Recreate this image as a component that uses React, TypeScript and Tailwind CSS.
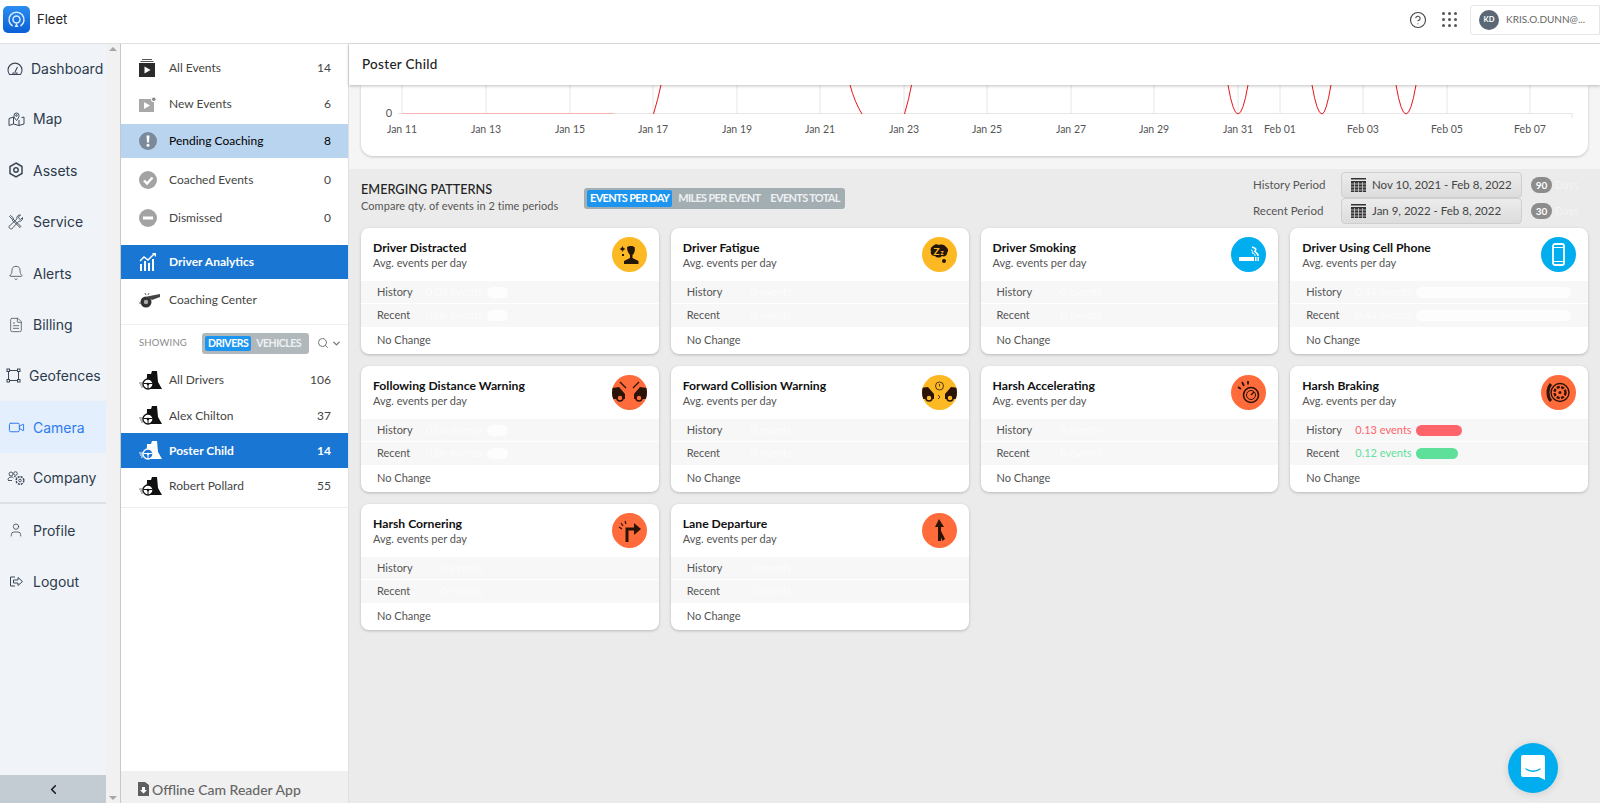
import { ReactNode } from "react";
import { Bell, ChevronDown, ChevronLeft, CircleHelp, FileText, Search, User, Video } from "lucide-react";

const UI_FONT = "font-['Lato',sans-serif]";

function Dial() {
  return (
    <svg width="16" height="15" viewBox="0 0 16 15" fill="none" stroke="currentColor" strokeWidth="1.100">
      <path d="M2.500 13.500a7 7 0 1 1 11 0z" />
      <path d="M8 11l2.500-5M6 13.500v-1.500h4v1.500" />
    </svg>
  );
}

function FoldMap() {
  return (
    <svg width="17" height="16" viewBox="0 0 17 16" fill="none" stroke="currentColor" strokeWidth="1">
      <path d="M5.500 6L1 7.500v7L5.500 13l5.500 1.500 5-1.500V6l-2.500.7M5.500 6v7M11 9v5.500" />
      <path d="M8.500 9.500C6.800 7.500 6 6 6 4.500a2.500 2.500 0 0 1 5 0c0 1.500-.8 3-2.500 5z" />
      <circle cx="8.500" cy="4.500" r=".8" />
    </svg>
  );
}

function Hex() {
  return (
    <svg width="16" height="16" viewBox="0 0 16 16" fill="none" stroke="currentColor" strokeWidth="1.500">
      <path d="M8 1l6 3.500v7L8 15l-6-3.500v-7z" />
      <circle cx="8" cy="8" r="2.200" />
    </svg>
  );
}

function Tools() {
  return (
    <svg width="16" height="16" viewBox="0 0 16 16" fill="none" stroke="currentColor" strokeWidth=".9">
      <path d="M1.500 2.500l1-1L5.500 4 4.500 5.500zM5 5l8 7.500-1 1L4 6" />
      <path d="M14.500 3.500L12.500 5.500 11 4.500 10.500 3 12.500 1a3 3 0 0 0-3.500 3.800L2.500 11a2 2 0 1 0 2.500 2.500l6-6.300a3 3 0 0 0 3.500-3.700z" />
    </svg>
  );
}

function Fence() {
  return (
    <svg width="15" height="15" viewBox="0 0 15 15" fill="none" stroke="currentColor" strokeWidth="1">
      <path d="M2.500 2v11M12.500 2v11M2 2.500h11M2 12.500h11" />
      <rect x="1" y="1" width="2.500" height="2.500" fill="#f0f4f8" />
      <rect x="11.500" y="1" width="2.500" height="2.500" fill="#f0f4f8" />
      <rect x="1" y="11.500" width="2.500" height="2.500" fill="#f0f4f8" />
      <rect x="11.500" y="11.500" width="2.500" height="2.500" fill="#f0f4f8" />
    </svg>
  );
}

function CompanyIcon() {
  return (
    <svg width="18" height="16" viewBox="0 0 18 16" fill="none" stroke="currentColor" strokeWidth=".9">
      <circle cx="4" cy="4" r="2" />
      <circle cx="8.500" cy="3.500" r="1.800" />
      <path d="M1 10c0-2 1.500-3 3-3s2 .5 2.500 1M7 6.500c1 0 2 .3 2.500 1" />
      <path d="M1 10.500h4" />
      <circle cx="13" cy="10.500" r="3.800" strokeDasharray="2 1" strokeWidth="1.500" />
      <circle cx="13" cy="10.500" r="1.300" />
    </svg>
  );
}

function LogoutIcon() {
  return (
    <svg width="15" height="13" viewBox="0 0 15 13" fill="none" stroke="currentColor" strokeWidth="1">
      <path d="M6 2H1.500v9H6" />
      <path d="M4.500 5h4.500V2.500L13.500 6.500 9 10.500V8H4.500z" />
    </svg>
  );
}

const NAV: { label: string; icon: ReactNode; iconBox: string; gap: string; h: string; active?: boolean; rule?: boolean }[] = [
  { label: "Dashboard", icon: <Dial />, iconBox: "pl-[7px]", gap: "gap-[8px]", h: "h-[49px]" },
  { label: "Map", icon: <FoldMap />, iconBox: "pl-[8px]", gap: "gap-[8px]", h: "h-[51px]" },
  { label: "Assets", icon: <Hex />, iconBox: "pl-[8px]", gap: "gap-[9px]", h: "h-[52px]" },
  { label: "Service", icon: <Tools />, iconBox: "pl-[8px]", gap: "gap-[9px]", h: "h-[51px]" },
  { label: "Alerts", icon: <Bell size={16} strokeWidth={1.200} />, iconBox: "pl-[8px]", gap: "gap-[9px]", h: "h-[52px]" },
  { label: "Billing", icon: <FileText size={16} strokeWidth={1.100} />, iconBox: "pl-[8px]", gap: "gap-[9px]", h: "h-[51px]" },
  { label: "Geofences", icon: <Fence />, iconBox: "pl-[6px]", gap: "gap-[8px]", h: "h-[51px]" },
  { label: "Camera", icon: <Video size={17} strokeWidth={1.400} />, iconBox: "pl-[8px]", gap: "gap-[8px]", h: "h-[52px]", active: true },
  { label: "Company", icon: <CompanyIcon />, iconBox: "pl-[7px]", gap: "gap-[8px]", h: "h-[51px]", rule: true },
  { label: "Profile", icon: <User size={16} strokeWidth={1.200} />, iconBox: "pl-[8px]", gap: "gap-[9px]", h: "h-[52px]" },
  { label: "Logout", icon: <LogoutIcon />, iconBox: "pl-[9px]", gap: "gap-[9px]", h: "h-[51px]" },
];

function FilmStack() {
  return (
    <svg width="16" height="18" viewBox="0 0 16 18">
      <path d="M3 0h10v1H3zM1.500 2h13v1h-13z" fill="#555" />
      <rect y="4" width="16" height="14" fill="#2b2b2b" />
      <path d="M5.500 7.500v7l6-3.500z" fill="#fff" />
    </svg>
  );
}

function NewFilm() {
  return (
    <svg width="17" height="15" viewBox="0 0 17 15">
      <rect y="2" width="15" height="13" fill="#a8a8a8" />
      <path d="M5 5v7l6-3.500z" fill="#fff" />
      <circle cx="14.500" cy="2.500" r="2.500" fill="#fff" />
      <circle cx="14.800" cy="2.200" r="1.800" fill="#888" />
    </svg>
  );
}

function Pending() {
  return (
    <svg width="18" height="18" viewBox="0 0 18 18">
      <circle cx="9" cy="9" r="9" fill="#7b8a9b" />
      <path d="M7.500 3.500h3l-.5 7H8z" fill="#fff" />
      <circle cx="9" cy="13.300" r="1.500" fill="#fff" />
    </svg>
  );
}

function Coached() {
  return (
    <svg width="18" height="18" viewBox="0 0 18 18">
      <circle cx="9" cy="9" r="9" fill="#a3a3a3" />
      <path d="M5 9.500l3 3 5.500-6" fill="none" stroke="#fff" strokeWidth="2.400" />
    </svg>
  );
}

function Dismissed() {
  return (
    <svg width="18" height="18" viewBox="0 0 18 18">
      <circle cx="9" cy="9" r="9" fill="#a3a3a3" />
      <rect x="4" y="7.500" width="10" height="3" fill="#fff" />
    </svg>
  );
}

function AnalyticsIcon() {
  return (
    <svg width="18" height="18" viewBox="0 0 18 18" fill="#fff">
      <path d="M1 18v-7h2v7zM5 18V8h2v10zM9 18v-8h2v8zM13 18V6h2v12z" />
      <path d="M1 8l4-4 4 3 6-6" fill="none" stroke="#fff" strokeWidth="1.400" />
      <path d="M13 0h4v4z" />
    </svg>
  );
}

function Whistle() {
  return (
    <svg width="22" height="16" viewBox="0 0 22 16">
      <circle cx="7" cy="10" r="5.500" fill="#333" />
      <circle cx="7" cy="10" r="2.200" fill="#aaa" />
      <path d="M8 4.500L21 2v3l-8 3z" fill="#444" />
      <path d="M0 11h2M6 1l1 2M10 1l-1 2" stroke="#666" strokeWidth="1" />
    </svg>
  );
}

function DriverIcon({ light }: { light?: boolean }) {
  const fg = light ? "#fff" : "#111";
  const bg = light ? "#1976d2" : "#fff";
  return (
    <svg width="23" height="19" viewBox="0 0 23 19">
      <path d="M8 5V3h4l1-3h5l1 11 4 7H7z" fill={fg} />
      <path d="M0 12h4M1 14h3M2 16h2" stroke={light ? "#fff" : "#777"} strokeWidth="1" />
      <circle cx="9" cy="13" r="5" fill={bg} stroke={fg} strokeWidth="1.300" />
      <circle cx="9" cy="13" r="1.300" fill={fg} />
      <path d="M4.500 12.500h9M9 13v4.500" stroke={fg} strokeWidth="1" />
    </svg>
  );
}

function FileDown() {
  return (
    <svg width="11" height="14" viewBox="0 0 11 14">
      <path d="M0 0h7l4 3v11H0z" fill="#5f5f5f" />
      <path d="M4 5h3v3h2l-3.500 3.500L2 8h2z" fill="#fff" />
    </svg>
  );
}

function SubRow({ icon, label, count, h, active, strong }: { icon: ReactNode; label: string; count?: string; h: string; active?: "soft" | "solid"; strong?: boolean }) {
  const bg = active === "soft" ? "bg-[#b9d4ef]" : active === "solid" ? "bg-[#1976d2] text-white" : "text-[#444]";
  return (
    <div className={`flex items-center pl-[18px] pr-[17px] text-[12px] ${h} ${bg} ${strong ? "font-bold" : ""}`}>
      <span className="flex w-[30px] shrink-0 justify-start">{icon}</span>
      <span>{label}</span>
      {count && <span className="ml-auto">{count}</span>}
    </div>
  );
}

function Sidebar() {
  return (
    <aside className="flex h-full w-[106px] shrink-0 flex-col bg-[#f0f4f8] font-['Inter',sans-serif] text-[14px] text-[#2d3a4c]">
      {NAV.map((n) => (
        <div key={n.label} className={`flex items-center ${n.h} ${n.gap} ${n.iconBox} ${n.active ? "bg-[#e3effd] text-[#2f7bf0]" : ""} ${n.rule ? "border-b-2 border-[#dde1e5]" : ""}`}>
          <span className={n.active ? "text-[#2f7bf0]" : "text-[#3c4654]"}>{n.icon}</span>
          <span>{n.label}</span>
        </div>
      ))}
      <div className="mt-auto flex h-[28px] items-center justify-center bg-[#c3ccd3] text-[#1a1a1a]">
        <ChevronLeft size={15} strokeWidth={2.500} />
      </div>
    </aside>
  );
}

function SubNav() {
  return (
    <div className={`flex h-full w-[228px] shrink-0 flex-col border-l border-[#c6c9cc] bg-white pt-[6px] ${UI_FONT}`}>
      <SubRow icon={<FilmStack />} label="All Events" count="14" h="h-[36px]" />
      <SubRow icon={<NewFilm />} label="New Events" count="6" h="h-[36px]" />
      <div className="h-[2px]" />
      <SubRow icon={<Pending />} label="Pending Coaching" count="8" h="h-[34px]" active="soft" />
      <SubRow icon={<Coached />} label="Coached Events" count="0" h="h-[44px]" />
      <SubRow icon={<Dismissed />} label="Dismissed" count="0" h="h-[32px]" />
      <div className="h-[11px]" />
      <SubRow icon={<AnalyticsIcon />} label="Driver Analytics" h="h-[34px]" active="solid" strong />
      <div className="h-[1px]" />
      <SubRow icon={<Whistle />} label="Coaching Center" h="h-[40px]" />
      <div className="mt-[4px] flex h-[37px] items-center border-t border-[#f0f0f0] pl-[18px] pr-[14px]">
        <span className="text-[9.500px] tracking-[0.2px] text-[#8a8a8a]">SHOWING</span>
        <div className="ml-[15px] flex h-[21px] shrink-0 items-center rounded-[3px] bg-[#b0b8bc] px-[3px] text-[10.500px] font-bold tracking-[-0.5px] text-[#eef1f2]">
          <span className="rounded-[2px] bg-[#1b95f0] px-[3px] py-[1px] leading-[13px] text-white">DRIVERS</span>
          <span className="px-[5px] leading-[13px]">VEHICLES</span>
        </div>
        <Search size={12} className="ml-[8px] shrink-0 text-[#777]" />
        <ChevronDown size={11} strokeWidth={3} className="ml-[2px] shrink-0 text-[#777]" />
      </div>
      <div className="h-[1px]" />
      <SubRow icon={<DriverIcon />} label="All Drivers" count="106" h="h-[36px]" />
      <SubRow icon={<DriverIcon />} label="Alex Chilton" count="37" h="h-[35px]" />
      <SubRow icon={<DriverIcon light />} label="Poster Child" count="14" h="h-[35px]" active="solid" strong />
      <SubRow icon={<DriverIcon />} label="Robert Pollard" count="55" h="h-[36px]" />
      <div className="mt-[3px] border-b border-[#eeeeee]" />
      <div className="mt-auto flex h-[32px] items-center gap-[3px] bg-[#f0f0f0] pl-[17px] pt-[4px] text-[14px] font-medium text-[#666]">
        <FileDown />
        <span>Offline Cam Reader App</span>
      </div>
    </div>
  );
}

const TICKS: [string, number][] = [
  ["Jan 11", 402], ["Jan 13", 486], ["Jan 15", 570], ["Jan 17", 653], ["Jan 19", 737], ["Jan 21", 820], ["Jan 23", 904],
  ["Jan 25", 987], ["Jan 27", 1071], ["Jan 29", 1154], ["Jan 31", 1238], ["Feb 01", 1280], ["Feb 03", 1363], ["Feb 05", 1447], ["Feb 07", 1530],
];

function Chart() {
  const x = (n: number) => n - 361;
  return (
    <div className="h-[71px] rounded-b-[12px] bg-white shadow-[0_1px_3px_rgba(0,0,0,0.2)]">
      <svg width="1228" height="71" viewBox="0 0 1228 71" className="block" fontFamily="Lato, sans-serif">
        {TICKS.map(([label, at]) => (
          <g key={label}>
            <line x1={x(at)} x2={x(at)} y1="0" y2="29" stroke="#e6e6e6" />
            <text x={x(at)} y="48" textAnchor="middle" fontSize="10.500" fill="#555">{label}</text>
          </g>
        ))}
        <line x1="37" x2="1211" y1="28.500" y2="28.500" stroke="#e6e6e6" />
        <line x1="1211" x2="1211" y1="28" y2="33" stroke="#e6e6e6" />
        <text x="28" y="32" textAnchor="middle" fontSize="11" fill="#555">0</text>
        <line x1="41" x2="253" y1="28.500" y2="28.500" stroke="#f5b5b5" />
        <g fill="none" stroke="#e8141c" strokeWidth="1">
          <path d="M292.500 29Q297 14 300 0" />
          <path d="M489 0Q494 18 501 29" />
          <path d="M543.500 29Q548 14 550.500 0" />
          <path d="M867 0Q872 29 877 29Q882 29 887 0" />
          <path d="M951 0Q956 29 961 29Q965 29 970 0" />
          <path d="M1035 0Q1040 29 1045 29Q1050 29 1055 0" />
        </g>
      </svg>
    </div>
  );
}

function Toggle() {
  return (
    <div className="ml-[23px] mt-[19px] flex h-[21px] items-center rounded-[3px] bg-[#a3aeb3] px-[3px] text-[11px] font-bold tracking-[-0.7px] text-[#eef1f2]">
      <span className="flex h-[17px] items-center rounded-[2px] bg-[#1b95f0] px-[3px] text-white">EVENTS PER DAY</span>
      <span className="ml-[6px]">MILES PER EVENT</span>
      <span className="ml-[10px] mr-[2px]">EVENTS TOTAL</span>
    </div>
  );
}

function Calendar() {
  return (
    <svg width="15" height="14" viewBox="0 0 15 14">
      <rect y="0" width="15" height="1.500" fill="#333" />
      <rect y="3" width="15" height="11" fill="#333" />
      <path d="M0 6h15M0 9h15M0 12h15M3.500 4v10M7.500 4v10M11.500 4v10" stroke="#cfcfcf" strokeWidth="0.800" />
    </svg>
  );
}

function Period({ label, range, days }: { label: string; range: string; days: string }) {
  return (
    <div className="flex items-center">
      <span className="w-[88px] text-[11.500px] text-[#555]">{label}</span>
      <div className="flex h-[26px] w-[181px] items-center gap-[6px] rounded-[4px] border border-[#cfcfcf] bg-linear-to-b from-[#ececec] to-[#dcdcdc] pl-[9px] text-[11.500px] text-[#444]">
        <Calendar />
        <span>{range}</span>
      </div>
      <span className="ml-[9px] flex h-[16px] w-[21px] items-center justify-center rounded-full bg-[#8c8c8c] text-[10px] font-bold text-white">{days}</span>
      <span className="ml-[3px] w-[24px] text-[11px] text-[#f3f3f3]">Days</span>
    </div>
  );
}

function Round({ bg, children }: { bg: string; children: ReactNode }) {
  return <div className={`flex h-[35px] w-[35px] shrink-0 items-center justify-center overflow-hidden rounded-full ${bg}`}>{children}</div>;
}

const AMBER = "bg-[#fdb924]";
const ORANGE = "bg-[#ff6b3b]";
const SKY = "bg-[#00aeef]";
const INK = "#2a1408";

const ICONS: Record<string, ReactNode> = {
  distracted: (
    <Round bg={AMBER}>
      <svg width="25" height="25" viewBox="0 0 25 25" fill="#23160a">
        <path d="M10 5c2-1.500 6-1.500 7.500 0 1 3 0 6-2 8v3l6 3v3H7v-3l6-3v-3c-2-2-3-5-3-8z" />
        <path d="M5.500 4l1 2 2 1-2 1-1 2-1-2-2-1 2-1zM5 12h2v2H5z" />
      </svg>
    </Round>
  ),
  fatigue: (
    <Round bg={AMBER}>
      <svg width="25" height="25" viewBox="0 0 25 25">
        <path d="M6 4c2-2 4-2 6-1 3-1 6 0 7 2 2 1 3 4 1 6 0 3-3 4-5 3-2 2-5 2-7 0-3 0-5-2-4-5-1-2 0-4 2-5z" fill="#23160a" />
        <circle cx="17" cy="19" r="2" fill="#23160a" />
        <text x="6.500" y="12.500" fontSize="10" fontWeight="700" fill="#fdb924" fontFamily="Lato, sans-serif">Z</text>
        <text x="13.500" y="13" fontSize="7" fontWeight="700" fill="#fdb924" fontFamily="Lato, sans-serif">z</text>
      </svg>
    </Round>
  ),
  smoking: (
    <Round bg={SKY}>
      <svg width="25" height="25" viewBox="0 0 25 25" fill="none" stroke="#fff">
        <rect x="3" y="15" width="15" height="4" fill="#fff" stroke="none" />
        <rect x="19" y="15" width="1.500" height="4" fill="#fff" stroke="none" />
        <rect x="21.500" y="15" width="1.500" height="4" fill="#fff" stroke="none" />
        <path d="M16 5c3 1 5 2 3 4-1 1 3 1 3 5" strokeWidth="1.500" />
        <path d="M15 8c2 .5 2 2 1 3 2 0 3 1 3 3" strokeWidth="1" />
      </svg>
    </Round>
  ),
  phone: (
    <Round bg={SKY}>
      <svg width="25" height="25" viewBox="0 0 25 25" fill="none" stroke="#fff" strokeWidth="1.800">
        <rect x="7" y="2" width="11" height="21" rx="2" />
        <path d="M7 5.500h11M7 19.500h11" strokeWidth="1" />
      </svg>
    </Round>
  ),
  following: (
    <Round bg={ORANGE}>
      <svg width="35" height="35" viewBox="0 0 35 35">
        <path d="M-1 13l8-1 6 7v5H-1z" fill={INK} />
        <path d="M36 13l-8-1-6 7v5h14z" fill={INK} />
        <circle cx="8" cy="23" r="3" fill="#ff6b3b" stroke={INK} strokeWidth="1.500" />
        <circle cx="27" cy="23" r="3" fill="#ff6b3b" stroke={INK} strokeWidth="1.500" />
        <path d="M8 7l6 6M27 7l-6 6" stroke={INK} strokeWidth="1.400" />
      </svg>
    </Round>
  ),
  forward: (
    <Round bg={AMBER}>
      <svg width="35" height="35" viewBox="0 0 35 35">
        <path d="M-1 13l7-1 6 7v5H-1z" fill={INK} />
        <path d="M36 13l-7-1-6 7v5h13z" fill={INK} />
        <circle cx="7" cy="23" r="3" fill="#fdb924" stroke={INK} strokeWidth="1.500" />
        <circle cx="28" cy="23" r="3" fill="#fdb924" stroke={INK} strokeWidth="1.500" />
        <circle cx="17.500" cy="11" r="4" fill="none" stroke={INK} strokeWidth="0.800" />
        <path d="M17.500 9v2.500M16 20l2 2-2 2" fill="none" stroke={INK} strokeWidth="0.800" />
      </svg>
    </Round>
  ),
  accelerating: (
    <Round bg={ORANGE}>
      <svg width="27" height="27" viewBox="0 0 27 27" fill="none" stroke={INK}>
        <circle cx="16" cy="16" r="7.500" strokeWidth="1.600" />
        <circle cx="16" cy="16" r="4.500" strokeWidth="1" />
        <path d="M16 16l3-3" strokeWidth="1.400" />
        <path d="M3 8l3 2M7 3l2 4M13 2l0 3.500" strokeWidth="1.800" />
      </svg>
    </Round>
  ),
  braking: (
    <Round bg={ORANGE}>
      <svg width="27" height="27" viewBox="0 0 27 27" fill="none" stroke={INK}>
        <path d="M6 5C2 9 2 18 6 22" strokeWidth="3" />
        <circle cx="15" cy="13.500" r="9" strokeWidth="1.400" />
        <circle cx="15" cy="13.500" r="5.500" strokeWidth="2.400" strokeDasharray="3 1.400" />
        <circle cx="15" cy="13.500" r="1.500" fill={INK} stroke="none" />
      </svg>
    </Round>
  ),
  cornering: (
    <Round bg={ORANGE}>
      <svg width="27" height="27" viewBox="0 0 27 27" fill="none" stroke={INK}>
        <path d="M11 25V12h9" strokeWidth="3" />
        <path d="M18 6l7 6-7 6z" fill={INK} stroke="none" />
        <path d="M3 10l3 2M5 6l2 3M9 4l1 3" strokeWidth="1.200" />
      </svg>
    </Round>
  ),
  lane: (
    <Round bg={ORANGE}>
      <svg width="25" height="25" viewBox="0 0 25 25" fill={INK}>
        <path d="M12 1l5 8h-3v14h-3V9H8z" />
        <path d="M14 13l4 8-2.500 2-2.500-6z" />
      </svg>
    </Round>
  ),
};

type Event = { title: string; icon: string; offset: string; hist?: string; rec?: string; histBar?: string; recBar?: string; live?: boolean };

const EVENTS: Event[] = [
  { title: "Driver Distracted", icon: "distracted", offset: "w-[49px]", hist: "0.06 events", rec: "0.06 events", histBar: "w-[21px]", recBar: "w-[21px]" },
  { title: "Driver Fatigue", icon: "fatigue", offset: "w-[64px]", hist: "0 events", rec: "0 events" },
  { title: "Driver Smoking", icon: "smoking", offset: "w-[64px]", hist: "0 events", rec: "0 events" },
  { title: "Driver Using Cell Phone", icon: "phone", offset: "w-[49px]", hist: "0.44 events", rec: "0.44 events", histBar: "w-[155px]", recBar: "w-[155px]" },
  { title: "Following Distance Warning", icon: "following", offset: "w-[49px]", hist: "0.06 events", rec: "0.06 events", histBar: "w-[21px]", recBar: "w-[21px]" },
  { title: "Forward Collision Warning", icon: "forward", offset: "w-[64px]", hist: "0 events", rec: "0 events" },
  { title: "Harsh Accelerating", icon: "accelerating", offset: "w-[64px]", hist: "0 events", rec: "0 events" },
  { title: "Harsh Braking", icon: "braking", offset: "w-[49px]", hist: "0.13 events", rec: "0.12 events", histBar: "w-[46px]", recBar: "w-[42px]", live: true },
  { title: "Harsh Cornering", icon: "cornering", offset: "w-[64px]", hist: "0 events", rec: "0 events" },
  { title: "Lane Departure", icon: "lane", offset: "w-[64px]", hist: "0 events", rec: "0 events" },
];

function StatRow({ label, value, bar, offset, tone, h }: { label: string; value?: string; bar?: string; offset: string; tone: string; h: string }) {
  const text = tone === "red" ? "text-[#ff646a]" : tone === "green" ? "text-[#5ee09b]" : "text-[#fcfcfc]";
  const fill = tone === "red" ? "bg-[#ff646a]" : tone === "green" ? "bg-[#5ee09b]" : "bg-[#fdfdfd]";
  return (
    <div className={`flex items-center bg-[#f7f7f7] pl-[16px] ${h}`}>
      <span className={`${offset} shrink-0 text-[#555]`}>{label}</span>
      <span className={`w-[61px] shrink-0 whitespace-nowrap ${text}`}>{value}</span>
      {bar && <span className={`h-[11px] rounded-full ${bar} ${fill}`} />}
    </div>
  );
}

function Card({ e }: { e: Event }) {
  return (
    <div className="flex h-[126px] flex-col overflow-hidden rounded-[8px] bg-white text-[11px] shadow-[0_1px_3px_rgba(0,0,0,0.22)]">
      <div className="flex h-[53px] shrink-0 justify-between pl-[12px] pr-[12px] pt-[9px]">
        <div>
          <div className="mt-[3px] text-[12.200px] font-bold leading-[15px] text-[#111]">{e.title}</div>
          <div className="mt-[1px] leading-[14px] text-[#555]">Avg. events per day</div>
        </div>
        {ICONS[e.icon]}
      </div>
      <StatRow label="History" value={e.hist} bar={e.histBar} offset={e.offset} tone={e.live ? "red" : "none"} h="h-[23px] border-b border-white" />
      <StatRow label="Recent" value={e.rec} bar={e.recBar} offset={e.offset} tone={e.live ? "green" : "none"} h="h-[23px]" />
      <div className="flex flex-1 items-center pl-[16px] text-[#555]">No Change</div>
    </div>
  );
}

function Patterns() {
  return (
    <section className="flex-1 bg-[#ebebeb] px-[12px]">
      <div className="flex h-[59px] justify-between">
        <div className="flex">
          <div className="w-[200px] pt-[11px]">
            <div className="text-[12.700px] font-medium leading-[18px] text-[#222]">EMERGING PATTERNS</div>
            <div className="text-[11px] leading-[16px] tracking-[0.05px] text-[#555]">Compare qty. of events in 2 time periods</div>
          </div>
          <Toggle />
        </div>
        <div className="mr-[9px] flex flex-col pt-[3px]">
          <Period label="History Period" range="Nov 10, 2021 - Feb 8, 2022" days="90" />
          <Period label="Recent Period" range="Jan 9, 2022 - Feb 8, 2022" days="30" />
        </div>
      </div>
      <div className="grid grid-cols-4 gap-[12px]">
        {EVENTS.map((e) => (
          <Card key={e.title} e={e} />
        ))}
      </div>
    </section>
  );
}

function TopBar() {
  return (
    <header className="flex h-[44px] shrink-0 items-center border-b border-[#dfe1e3] bg-white pb-[4px]">
      <div className="ml-[3px] flex h-[27px] w-[27px] items-center justify-center rounded-[5px] bg-linear-to-b from-[#2b8df0] to-[#0a5fd6]">
        <svg width="19" height="19" viewBox="0 0 19 19" fill="none" stroke="#dcecff" strokeWidth="1.500">
          <path d="M5.500 16A7.500 7.500 0 1 1 13.500 16" />
          <circle cx="9.500" cy="9.500" r="3.500" />
          <path d="M9.500 13l-2 4h4z" fill="#dcecff" stroke="none" />
        </svg>
      </div>
      <span className="ml-[7px] font-['Inter',sans-serif] text-[13px] text-[#222]">Fleet</span>
      <div className="ml-auto flex items-center">
        <CircleHelp size={18} strokeWidth={1.500} className="text-[#444]" />
        <div className="ml-[15px] grid grid-cols-3 gap-[3px]">
          {Array.from({ length: 9 }).map((_, i) => (
            <span key={i} className="h-[3px] w-[3px] rounded-full bg-[#555]" />
          ))}
        </div>
        <div className="ml-[13px] flex h-[30px] w-[130px] items-center rounded-l-[3px] border border-[#e6e6e6] pl-[8px]">
          <span className={`flex h-[20px] w-[20px] items-center justify-center rounded-full bg-[#5b6775] text-[7.500px] font-bold text-white ${UI_FONT}`}>KD</span>
          <span className={`ml-[7px] text-[10px] text-[#666] ${UI_FONT}`}>KRIS.O.DUNN@...</span>
        </div>
      </div>
    </header>
  );
}

function Scrollbar() {
  return (
    <div className="flex h-full w-[14px] shrink-0 flex-col items-center justify-between bg-[#f1f1f1] py-[3px]">
      <span className="h-0 w-0 border-x-[4px] border-b-[4px] border-x-transparent border-b-[#a6a6a6]" />
      <span className="h-0 w-0 border-x-[4px] border-t-[4px] border-x-transparent border-t-[#a6a6a6]" />
    </div>
  );
}

export default function App() {
  return (
    <div className="flex h-screen w-full flex-col overflow-hidden bg-white">
      <TopBar />
      <div className="flex min-h-0 flex-1">
        <Sidebar />
        <Scrollbar />
        <SubNav />
        <main className={`relative flex min-w-0 flex-1 flex-col border-l border-[#e0e0e0] bg-[#f5f5f5] ${UI_FONT}`}>
          <div className="z-10 flex h-[41px] shrink-0 items-center bg-white pl-[13px] text-[13.500px] font-medium tracking-[0.3px] text-[#222] shadow-[0_1px_3px_rgba(0,0,0,0.25)]">Poster Child</div>
          <div className="h-[84px] shrink-0 px-[12px]">
            <Chart />
          </div>
          <Patterns />
          <button className="absolute bottom-[10px] right-[42px] flex h-[50px] w-[50px] items-center justify-center rounded-full bg-[#00aeef] shadow-[0_1px_8px_rgba(0,0,0,0.12)]">
            <svg width="26" height="28" viewBox="0 0 26 28">
              <path d="M3 1h20a2 2 0 0 1 2 2v23l-6-3H3a2 2 0 0 1-2-2V3a2 2 0 0 1 2-2z" fill="#fff" />
              <path d="M6 15c4 3 10 3 14 0" fill="none" stroke="#00aeef" strokeWidth="1.300" strokeLinecap="round" />
            </svg>
          </button>
        </main>
      </div>
    </div>
  );
}
